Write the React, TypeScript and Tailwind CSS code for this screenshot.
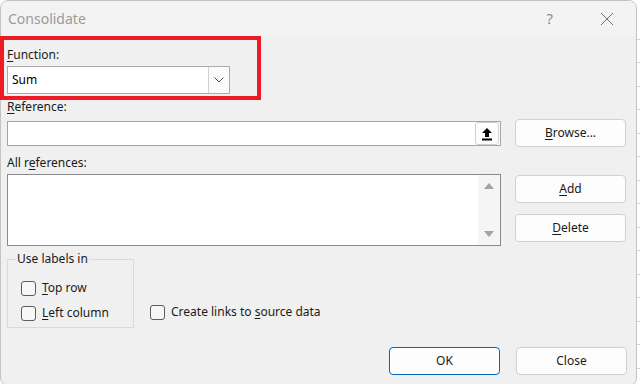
import React from 'react';

const font = { fontFamily: '"Noto Sans", "Open Sans", sans-serif' };

function Key({ children }: { children: React.ReactNode }) {
    return <span className="underline underline-offset-2 decoration-1">{children}</span>;
}

function CheckBox({ label }: { label: React.ReactNode }) {
    return (
        <label className="flex items-center h-[16px]">
            <span className="w-[15px] h-[15px] rounded-[3px] border border-[#5c5c5c] bg-[#f7f7f7]" />
            <span className="ml-[6px] text-[12px] leading-4 text-[#1a1a1a]">{label}</span>
        </label>
    );
}

function Button({ children, primary }: { children: React.ReactNode; primary?: boolean }) {
    return (
        <button
            className={
                primary
                    ? 'h-[28px] w-[111px] rounded-[4px] border border-[#0067c0] bg-[#fdfdfd] text-[12px] text-[#1a1a1a]'
                    : 'h-[28px] w-[111px] rounded-[4px] border border-[#d0d0d0] bg-[#fdfdfd] text-[12px] text-[#1a1a1a]'
            }
        >
            {children}
        </button>
    );
}

export default function App() {
    const rows = Array.from({ length: 17 });
    return (
        <div className="relative w-[640px] h-[384px] overflow-hidden bg-white" style={font}>
            {/* spreadsheet behind the dialog */}
            <div className="flex flex-col pt-[16px]">
                {rows.map((_, i) => (
                    <div key={i} className="h-[23.5px] border-b border-[#d4d4d4]" />
                ))}
            </div>

            <div className="absolute left-0 top-0 w-[637px] h-[386px] rounded-[8px] border border-[#c4c4c4] bg-[#f0f0f0] overflow-hidden flex flex-col">
                {/* title bar */}
                <div className="h-[35px] bg-[#f3f3f3] flex items-center">
                    <span className="ml-[7px] text-[14px] text-[#9a9a9a]">Consolidate</span>
                    <span className="ml-auto mr-[47px] text-[15px] text-[#8a8a8a]">?</span>
                    <svg width="14" height="14" viewBox="0 0 14 14" className="mr-[22px]">
                        <path d="M1 1 L13 13 M13 1 L1 13" stroke="#6e6e6e" strokeWidth="1" />
                    </svg>
                </div>

                <div className="flex">
                    {/* left column */}
                    <div className="ml-[6px] w-[494px] flex flex-col">
                        <div className="mt-[11px] text-[12px] leading-4 text-[#1a1a1a]"><Key>F</Key>unction:</div>
                        <div className="mt-[3px] h-[28px] w-[223px] flex border border-[#ababab] bg-white">
                            <span className="ml-[4px] self-center text-[12px] text-black">Sum</span>
                            <span className="ml-auto w-[21px] border-l border-[#d0d0d0] bg-[#fbfbfb] flex items-center justify-center">
                                <svg width="10" height="6" viewBox="0 0 10 6">
                                    <path d="M0.5 0.5 L5 5 L9.5 0.5" fill="none" stroke="#4a4a4a" strokeWidth="1" />
                                </svg>
                            </span>
                        </div>
                        <div className="mt-[5px] text-[12px] leading-4 text-[#1a1a1a]"><Key>R</Key>eference:</div>
                        <div className="mt-[6px] h-[25px] flex justify-end items-center border border-[#a4a4a4] bg-white pr-px">
                            <span className="w-[24px] h-[23px] rounded-[3px] border border-[#d0d0d0] bg-[#fdfdfd] flex items-center justify-center">
                                <svg width="12" height="14" viewBox="0 0 12 14">
                                    <path d="M6 1 L11 6 L8 6 L8 10 L4 10 L4 6 L1 6 Z" fill="#000" />
                                    <rect x="1" y="11.5" width="10" height="2" fill="#000" />
                                </svg>
                            </span>
                        </div>
                        <div className="mt-[9px] text-[12px] leading-4 text-[#1a1a1a]">All r<Key>e</Key>ferences:</div>
                        <div className="mt-[3px] h-[72px] flex justify-end border border-[#8a8a8a] bg-white">
                            <div className="w-[22px] bg-[#f5f5f5] flex flex-col items-center justify-between py-[8px]">
                                <svg width="10" height="6" viewBox="0 0 10 6"><path d="M0 6 L5 0 L10 6 Z" fill="#a3a3a3" /></svg>
                                <svg width="10" height="6" viewBox="0 0 10 6"><path d="M0 0 L5 6 L10 0 Z" fill="#a3a3a3" /></svg>
                            </div>
                        </div>
                    </div>

                    {/* right column */}
                    <div className="ml-[14px] flex flex-col">
                        <div className="mt-[83px]"><Button><Key>B</Key>rowse...</Button></div>
                        <div className="mt-[28px]"><Button><Key>A</Key>dd</Button></div>
                        <div className="mt-[11px]"><Button><Key>D</Key>elete</Button></div>
                    </div>
                </div>

                <div className="flex items-end mt-[5px]">
                    <fieldset className="ml-[6px] w-[127px] h-[77px] border border-[#dadada] px-[13px]">
                        <legend className="ml-[-5px] px-px text-[12px] leading-4 text-[#1a1a1a]">Use labels in</legend>
                        <div className="mt-[13px]"><CheckBox label={<><Key>T</Key>op row</>} /></div>
                        <div className="mt-[9px]"><CheckBox label={<><Key>L</Key>eft column</>} /></div>
                    </fieldset>
                    <div className="ml-[16px] mb-[8px]"><CheckBox label={<>Create links to <Key>s</Key>ource data</>} /></div>
                </div>

                <div className="flex justify-end gap-[16px] mt-[19px] mr-[9px]">
                    <Button primary>OK</Button>
                    <Button>Close</Button>
                </div>
            </div>

            {/* red highlight annotation */}
            <div className="absolute left-0 top-[36px] w-[261px] h-[64px] border-[4px] border-[#ed1c24]" />
        </div>
    );
}
